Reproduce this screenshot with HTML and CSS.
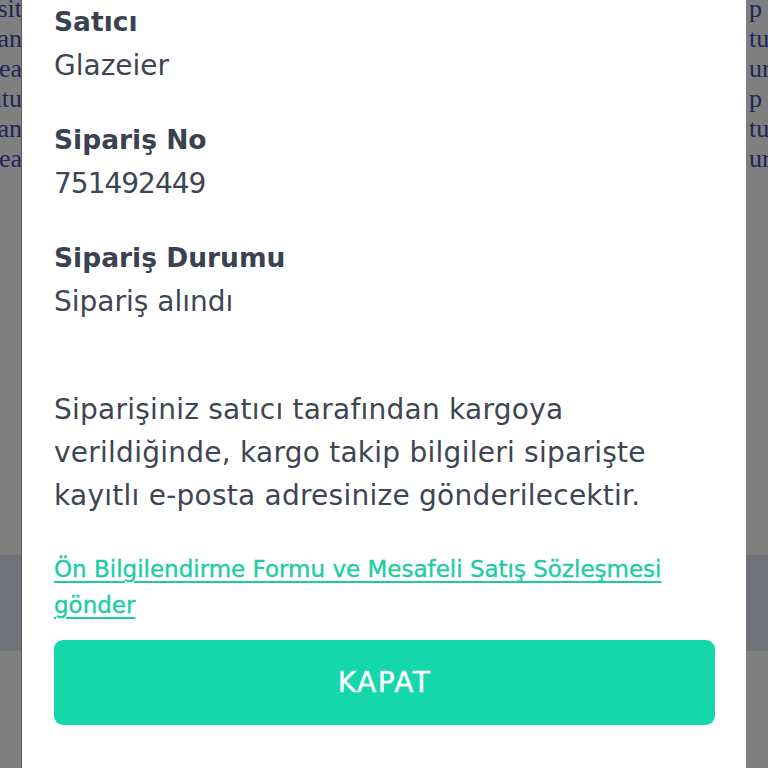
FILE: index.html
```html
<!DOCTYPE html>
<html lang="tr">
<head>
<meta charset="utf-8">
<title>Sipariş</title>
<link rel="stylesheet" href="styles.css">
</head>
<body>
<div class="screen">
  <aside class="side side-left">
    <div class="ghost">
      <span>ipsum dolor sit</span>
      <span>lorem ipsum an</span>
      <span>dolor sit amet ea</span>
      <span>consectetur atu</span>
      <span>lorem ipsum an</span>
      <span>dolor sit amet ea</span>
    </div>
    <div class="band"></div>
  </aside>
  <main class="modal">
    <section class="field">
      <h3 class="label">Satıcı</h3>
      <p class="value">Glazeier</p>
    </section>
    <section class="field">
      <h3 class="label">Sipariş No</h3>
      <p class="value value-num">751492449</p>
    </section>
    <section class="field">
      <h3 class="label">Sipariş Durumu</h3>
      <p class="value">Sipariş alındı</p>
    </section>
    <p class="note">Siparişiniz satıcı tarafından kargoya verildiğinde, kargo takip bilgileri siparişte kayıtlı e-posta adresinize gönderilecektir.</p>
    <a class="link" href="#">Ön Bilgilendirme Formu ve Mesafeli Satış Sözleşmesi gönder</a>
    <button class="btn" type="button">KAPAT</button>
  </main>
  <aside class="side side-right">
    <div class="ghost">
      <span>p</span>
      <span>tu</span>
      <span>ur</span>
      <span>p</span>
      <span>tu</span>
      <span>ur</span>
    </div>
    <div class="band"></div>
  </aside>
</div>
</body>
</html>
```
FILE: styles.css
```css
* { box-sizing: border-box; }
html, body { margin: 0; padding: 0; }
body {
  width: 768px;
  height: 768px;
  overflow: hidden;
  background: #7f7f7f;
  font-family: "DejaVu Sans", "Noto Sans", sans-serif;
}
.screen {
  display: flex;
  width: 768px;
  height: 768px;
}
.side {
  width: 22px;
  flex: none;
  overflow: hidden;
  display: flex;
  flex-direction: column;
  background: #7f7f7f;
}
.side-left { align-items: flex-end; }
.side-right { align-items: flex-start; }
.ghost {
  display: flex;
  flex-direction: column;
  margin-top: -6px;
  height: 561px;
  font-family: "Liberation Serif", serif;
  font-size: 26px;
  line-height: 30px;
  color: #22245a;
  white-space: nowrap;
}
.side-left .ghost { align-items: flex-end; }
.side-right .ghost { align-items: flex-start; padding-left: 3px; }
.band {
  height: 96px;
  width: 100%;
  background: #6f7276;
}
.modal {
  flex: 1;
  background: #fff;
  box-shadow: 0 0 0 1px #5c5c5c;
  padding: 0 31px 0 32px;
  display: flex;
  flex-direction: column;
}
.field { margin-bottom: 30px; }
.label {
  margin: 0;
  font-size: 26.5px;
  line-height: 44px;
  font-weight: 700;
  color: #3a4150;
}
.value {
  margin: 0;
  font-size: 28px;
  line-height: 44px;
  font-weight: 400;
  color: #3e4553;
}
.value-num { letter-spacing: -1px; }
.note {
  margin: 34px 0 0;
  font-size: 28px;
  line-height: 43px;
  letter-spacing: 0.25px;
  color: #3e4553;
}
.link {
  margin-top: 34px;
  font-size: 23px;
  line-height: 36px;
  font-weight: 400;
  color: #1ecca4;
  -webkit-text-stroke: 0.35px #1ecca4;
  text-decoration: underline;
  text-decoration-thickness: 2px;
  text-underline-offset: 4px;
}
.btn {
  margin-top: 17px;
  height: 85px;
  border: 0;
  border-radius: 9px;
  background: #14d7aa;
  color: #fff;
  -webkit-text-stroke: 0.4px #fff;
  font-family: inherit;
  font-size: 28px;
  letter-spacing: 1.5px;
  font-weight: 400;
}
```
